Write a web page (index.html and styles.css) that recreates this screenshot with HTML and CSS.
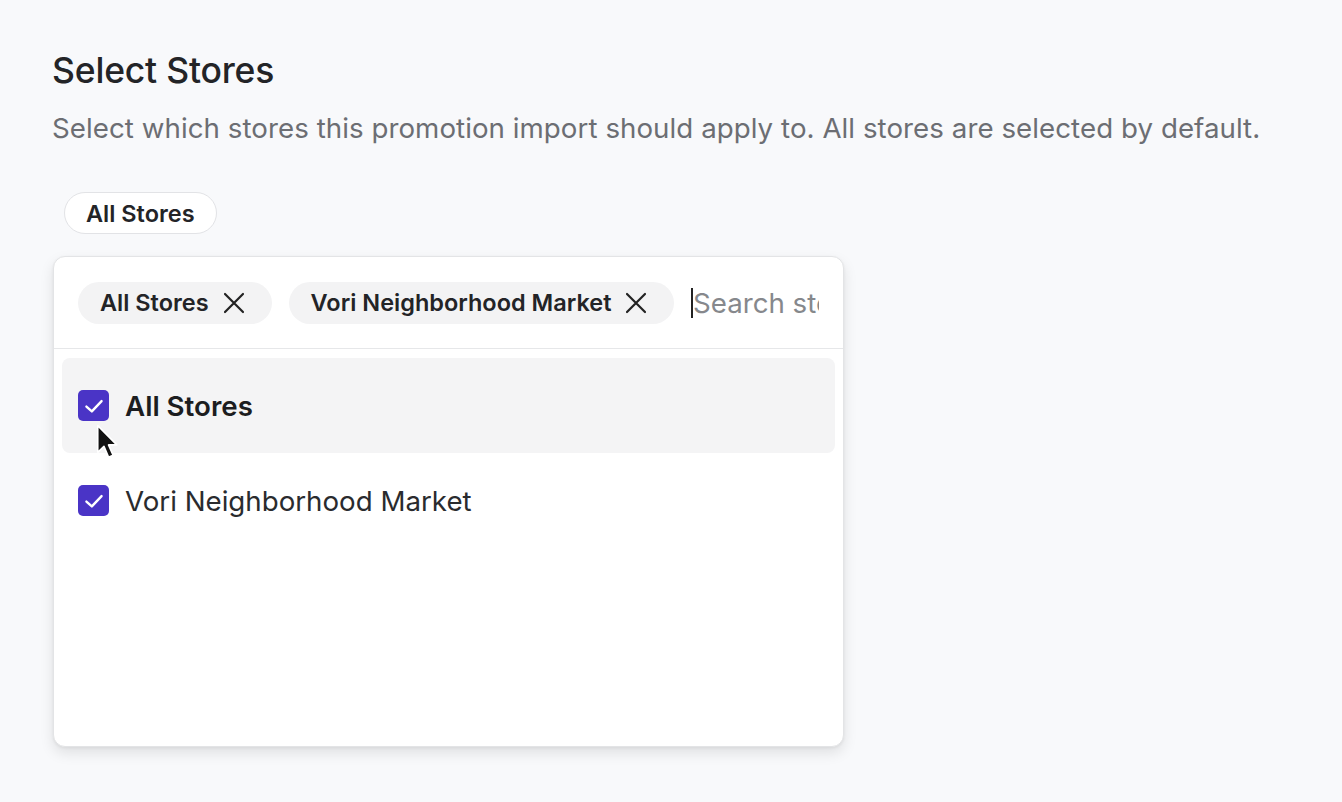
FILE: index.html
```
<!DOCTYPE html>
<html>
<head>
<meta charset="utf-8">
<link rel="stylesheet" href="styles.css">
</head>
<body>
<main class="page">
  <h1 class="title">Select Stores</h1>
  <p class="subtitle">Select which stores this promotion import should apply to. All stores are selected by default.</p>
  <div class="summary"><span class="summary-chip">All Stores</span></div>
  <div class="dropdown">
    <div class="control">
      <span class="tag">All Stores
        <svg class="x" viewBox="0 0 24 24" width="24" height="24"><path d="M3 3L21 21M21 3L3 21" stroke="#222" stroke-width="2.2" stroke-linecap="round" fill="none"/></svg>
      </span>
      <span class="tag">Vori Neighborhood Market
        <svg class="x" viewBox="0 0 24 24" width="24" height="24"><path d="M3 3L21 21M21 3L3 21" stroke="#222" stroke-width="2.2" stroke-linecap="round" fill="none"/></svg>
      </span>
      <div class="search"><span class="caret"></span><input class="search-input" type="text" placeholder="Search stores"></div>
    </div>
    <ul class="options">
      <li class="option active">
        <span class="check"><svg viewBox="0 0 24 24" width="26" height="26"><path d="M5 12.5L10 17L19 7.5" stroke="#fff" stroke-width="2.2" stroke-linecap="round" stroke-linejoin="round" fill="none"/></svg></span>
        <span class="label bold">All Stores</span>
        <svg class="cursor" viewBox="0 0 20 34" width="22" height="37"><path d="M1.5 1.5 L1.5 26 L7.2 20.6 L11.4 30.5 L15.6 28.7 L11.4 19.2 L19 19.2 Z" fill="#111" stroke="#fff" stroke-width="1.5" stroke-linejoin="round"/></svg>
      </li>
      <li class="option">
        <span class="check"><svg viewBox="0 0 24 24" width="26" height="26"><path d="M5 12.5L10 17L19 7.5" stroke="#fff" stroke-width="2.2" stroke-linecap="round" stroke-linejoin="round" fill="none"/></svg></span>
        <span class="label">Vori Neighborhood Market</span>
      </li>
    </ul>
  </div>
</main>
</body>
</html>
```
FILE: styles.css
```
* { box-sizing: border-box; }
html, body { margin: 0; padding: 0; }
body {
  background: #f8f9fb;
  font-family: Inter, "Noto Sans", sans-serif;
  color: #222326;
  width: 1342px;
  height: 802px;
  overflow: hidden;
}
.page {
  padding: 49px 0 0 52px;
}
.title {
  margin: 0;
  font-size: 35.5px;
  line-height: 44px;
  font-weight: 500;
  color: #232427;
  letter-spacing: -0.2px;
}
.subtitle {
  margin: 17px 0 0;
  font-size: 27.7px;
  line-height: 36px;
  color: #6c6e73;
  font-weight: 400;
  letter-spacing: 0.05px;
}
.summary {
  margin: 46px 0 0 12px;
  display: flex;
}
.summary-chip {
  display: inline-flex;
  align-items: center;
  height: 42px;
  padding: 0 21px;
  border: 1.5px solid #e2e3e6;
  border-radius: 21px;
  background: #fff;
  font-size: 23.5px;
  font-weight: 600;
  color: #232427;
}
.dropdown {
  margin-top: 22px;
  margin-left: 1px;
  width: 791px;
  height: 491px;
  background: #fff;
  border: 1px solid #e3e4e6;
  border-radius: 12px;
  box-shadow: 0 6px 14px rgba(0,0,0,0.10), 0 1px 3px rgba(0,0,0,0.06);
  overflow: hidden;
}
.control {
  display: flex;
  align-items: center;
  gap: 17px;
  padding: 24px;
  border-bottom: 1.5px solid #e6e7e9;
  height: 92px;
}
.tag {
  display: inline-flex;
  align-items: center;
  gap: 13px;
  height: 42px;
  padding: 0 26px 0 22px;
  border-radius: 21px;
  background: #f3f3f4;
  font-size: 23.5px;
  font-weight: 600;
  color: #232427;
  white-space: nowrap;
  flex: none;
}
.tag .x { display: block; flex: none; }
.search {
  flex: 1;
  min-width: 0;
  display: flex;
  align-items: center;
}
.caret {
  width: 1.5px;
  height: 30px;
  background: #222;
  flex: none;
}
.search-input {
  flex: 1;
  min-width: 0;
  width: 100%;
  border: none;
  outline: none;
  background: transparent;
  padding: 0;
  margin: 0;
  font-family: inherit;
  font-size: 27.7px;
  color: #222;
}
.search-input::placeholder {
  color: #86888c;
  opacity: 1;
}
.options {
  list-style: none;
  margin: 0;
  padding: 9px 8px;
}
.option {
  position: relative;
  display: flex;
  align-items: center;
  gap: 16px;
  height: 95px;
  padding-left: 16px;
  border-radius: 8px;
}
.option.active { background: #f4f4f5; }
.check {
  width: 31px;
  height: 31px;
  border-radius: 5px;
  background: #4a34c6;
  display: flex;
  align-items: center;
  justify-content: center;
  flex: none;
}
.check svg { display: block; }
.label {
  font-size: 27.7px;
  color: #2a2b2e;
}
.label.bold { font-weight: 600; color: #1c1d20; }
.cursor {
  position: absolute;
  left: 34px;
  top: 66px;
}
```
